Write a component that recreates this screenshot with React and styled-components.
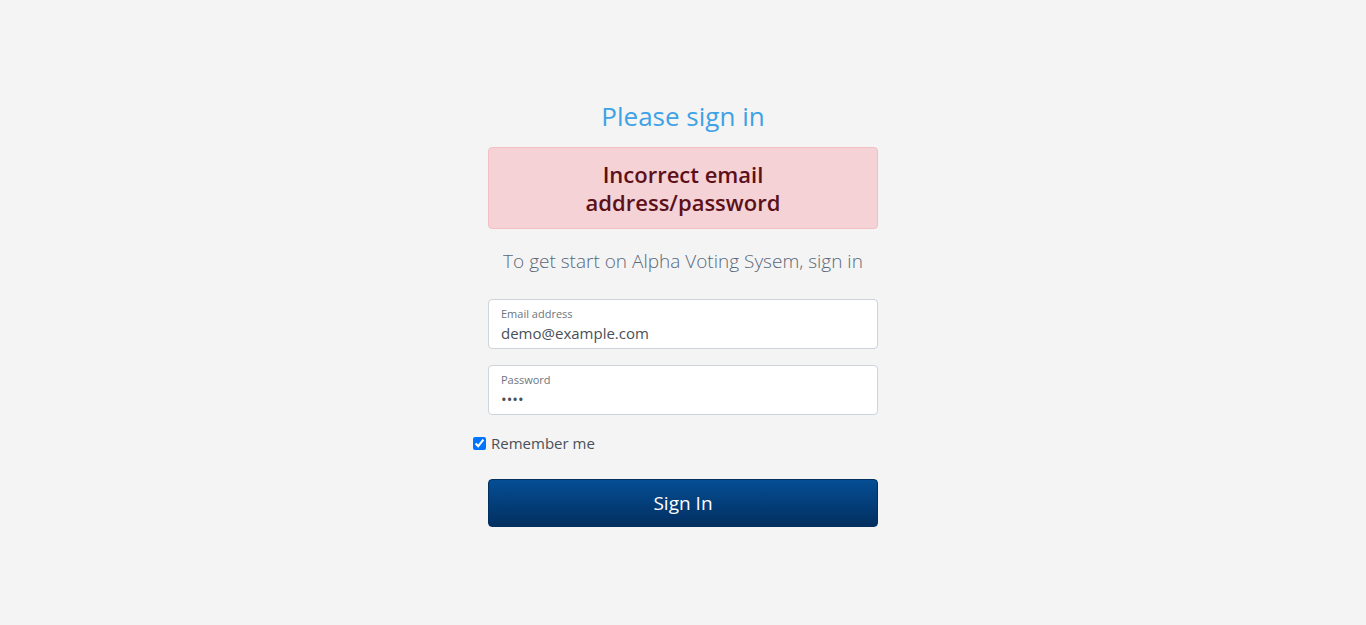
import React, { useState } from 'react';
import styled, { createGlobalStyle } from 'styled-components';

const GlobalStyle = createGlobalStyle`
    body {
        margin: 0;
        background: #f4f4f4;
        font-family: "Open Sans", "Noto Sans", sans-serif;
    }
`;

const Page = styled.main`
    min-height: 625px;
    display: flex;
    justify-content: center;
    padding-top: 97px;
    box-sizing: border-box;
`;

const Form = styled.form`
    width: 390px;
    display: flex;
    flex-direction: column;
    align-items: stretch;
`;

const Title = styled.h1`
    margin: 0 0 12px;
    text-align: center;
    font-size: 26px;
    font-weight: 400;
    line-height: 38px;
    color: #3ea2e5;
`;

const Alert = styled.div`
    background: #f5d2d5;
    border: 1px solid #f1bfc4;
    border-radius: 4px;
    padding: 12px 80px;
    text-align: center;
    font-size: 22px;
    font-weight: 600;
    line-height: 28px;
    color: #5c1019;
`;

const Lead = styled.p`
    margin: 18px 0 24px;
    text-align: center;
    font-size: 19px;
    font-weight: 300;
    line-height: 28px;
    color: #5a6878;
`;

const Field = styled.label`
    display: flex;
    flex-direction: column;
    height: 50px;
    box-sizing: border-box;
    padding: 7px 12px 0;
    margin-bottom: 16px;
    background: #fff;
    border: 1px solid #ced4da;
    border-radius: 4px;
`;

const FieldLabel = styled.span`
    font-size: 11px;
    line-height: 14px;
    color: #6c757d;
`;

const FieldInput = styled.input`
    border: none;
    outline: none;
    padding: 0;
    margin-top: 2px;
    background: transparent;
    font-family: inherit;
    font-size: 15px;
    line-height: 20px;
    color: #495057;
`;

const Check = styled.label`
    display: flex;
    align-items: center;
    gap: 5px;
    margin: 2px 0 0 -15px;
    font-size: 15px;
    color: #495057;

    input {
        margin: 0;
        width: 13px;
        height: 13px;
    }
`;

const Submit = styled.button`
    margin-top: 26px;
    height: 48px;
    border: 1px solid #02305f;
    border-radius: 4px;
    background: linear-gradient(#054e95, #022f60);
    color: #fff;
    font-family: inherit;
    font-size: 19px;
    cursor: pointer;
`;

export default function App() {
    const [email, setEmail] = useState('demo@example.com');
    const [password, setPassword] = useState('demo');
    const [remember, setRemember] = useState(true);

    return (
        <>
            <GlobalStyle />
            <Page>
                <Form onSubmit={(e) => e.preventDefault()}>
                    <Title>Please sign in</Title>
                    <Alert>Incorrect email address/password</Alert>
                    <Lead>To get start on Alpha Voting Sysem, sign in</Lead>
                    <Field>
                        <FieldLabel>Email address</FieldLabel>
                        <FieldInput type="email" value={email} onChange={(e) => setEmail(e.target.value)} />
                    </Field>
                    <Field>
                        <FieldLabel>Password</FieldLabel>
                        <FieldInput type="password" value={password} onChange={(e) => setPassword(e.target.value)} />
                    </Field>
                    <Check>
                        <input type="checkbox" checked={remember} onChange={(e) => setRemember(e.target.checked)} />
                        Remember me
                    </Check>
                    <Submit type="submit">Sign In</Submit>
                </Form>
            </Page>
        </>
    );
}
